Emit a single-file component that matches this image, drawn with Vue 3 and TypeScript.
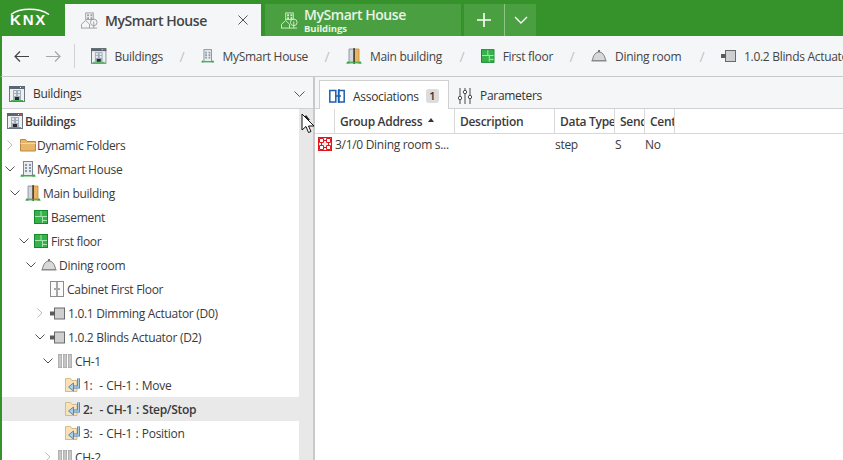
<script setup lang="ts">
interface Row {
  label: string
  icon: string
  left: number
  text: number
  chev?: 'open' | 'faint'
  bold?: boolean
  selected?: boolean
}

const crumbs = [
  { icon: 'i-buildings', label: 'Buildings', w: 16, gap: 8, total: 72 },
  { icon: 'i-house', label: 'MySmart House', w: 15, gap: 8, total: 107 },
  { icon: 'i-main', label: 'Main building', w: 16, gap: 8, total: 97 },
  { icon: 'i-floor', label: 'First floor', w: 15, gap: 8, total: 72 },
  { icon: 'i-room', label: 'Dining room', w: 16, gap: 8, total: 92 },
  { icon: 'i-device', label: '1.0.2 Blinds Actuator', w: 15, gap: 8, total: 160 },
]

const iconSize: Record<string, number> = { 'i-floor': 14, 'i-ch': 14, 'i-device': 15 }
const sizeOf = (icon: string): number => iconSize[icon] ?? 16

const rows: Row[] = [
  { label: 'Buildings', icon: 'i-buildings', left: 7, text: 25, bold: true },
  { label: 'Dynamic Folders', icon: 'i-folder', left: 20, text: 37, chev: 'faint' },
  { label: 'MySmart House', icon: 'i-house', left: 20, text: 37, chev: 'open' },
  { label: 'Main building', icon: 'i-main', left: 25, text: 43, chev: 'open' },
  { label: 'Basement', icon: 'i-floor', left: 34, text: 51 },
  { label: 'First floor', icon: 'i-floor', left: 34, text: 51, chev: 'open' },
  { label: 'Dining room', icon: 'i-room', left: 41, text: 59, chev: 'open' },
  { label: 'Cabinet First Floor', icon: 'i-cabinet', left: 49, text: 67 },
  { label: '1.0.1 Dimming Actuator (D0)', icon: 'i-device', left: 50, text: 68, chev: 'faint' },
  { label: '1.0.2 Blinds Actuator (D2)', icon: 'i-device', left: 50, text: 68, chev: 'open' },
  { label: 'CH-1', icon: 'i-ch', left: 58, text: 75, chev: 'open' },
  { label: '1:  - CH-1 : Move', icon: 'i-leaf', left: 65, text: 83 },
  { label: '2:  - CH-1 : Step/Stop', icon: 'i-leaf', left: 65, text: 83, selected: true },
  { label: '3:  - CH-1 : Position', icon: 'i-leaf', left: 65, text: 83 },
  { label: 'CH-2', icon: 'i-ch', left: 58, text: 75, chev: 'faint' },
]

const columns = [
  { label: '', w: 20 },
  { label: 'Group Address', w: 120, sort: true },
  { label: 'Description', w: 100 },
  { label: 'Data Type', w: 60 },
  { label: 'Send', w: 30 },
  { label: 'Central', w: 30 },
]

const cells = [
  { label: '3/1/0 Dining room s...', w: 220 },
  { label: 'step', w: 60 },
  { label: 'S', w: 30 },
  { label: 'No', w: 30 },
]
</script>

<template>
  <div class="app">
    <svg class="defs" width="0" height="0" aria-hidden="true">
      <defs>
        <symbol id="i-buildings" viewBox="0 0 16 16">
          <rect x="0.5" y="0.5" width="15" height="15" fill="#eef1f3" stroke="#6b7680" />
          <rect x="0" y="0" width="16" height="3" fill="#5b6670" />
          <rect x="11" y="1" width="1" height="1" fill="#fff" />
          <rect x="13" y="1" width="2" height="1" fill="#d85050" />
          <rect x="4" y="4" width="8" height="10" fill="#a2afbb" />
          <rect x="5" y="5" width="2" height="2" fill="#e4e9ed" />
          <rect x="9" y="5" width="2" height="2" fill="#e4e9ed" />
          <rect x="5" y="8" width="2" height="2" fill="#e4e9ed" />
          <rect x="9" y="8" width="2" height="2" fill="#e4e9ed" />
          <rect x="6" y="11" width="4" height="3" fill="#2b2b2b" />
          <rect x="2" y="14" width="12" height="1" fill="#46b452" />
        </symbol>
        <symbol id="i-house" viewBox="0 0 16 16">
          <rect x="3.5" y="0.5" width="9" height="14" fill="#e8ecef" stroke="#7b8894" />
          <path d="M5 3h2v2H5zM9 3h2v2H9zM5 6h2v2H5zM9 6h2v2H9zM5 9h2v2H5zM9 9h2v2H9z" fill="#8999a8" />
          <path d="M0 15.500 2 13l2 2.500zM12 15.500l2-2.500 2 2.500z" fill="#39a845" />
          <rect x="1" y="14.500" width="14" height="1" fill="#39a845" />
        </symbol>
        <symbol id="i-main" viewBox="0 0 16 16">
          <path d="M3 1h5v13H3z" fill="#cfd6dc" stroke="#7d8a96" stroke-width="0.8" />
          <path d="M8 1h5v13H8z" fill="#e8b566" stroke="#c08c3a" stroke-width="0.8" />
          <rect x="7.500" y="0" width="1.200" height="16" fill="#222" />
          <path d="M0 15.500 2 13l2 2.500zM12 15.500l2-2.500 2 2.500z" fill="#39a845" />
          <rect x="1" y="14.200" width="14" height="1.200" fill="#39a845" />
        </symbol>
        <symbol id="i-floor" viewBox="0 0 14 14">
          <rect x="0.500" y="0.500" width="13" height="13" fill="#35b34a" stroke="#128a2c" />
          <path d="M7 1v5M1 6.500h12M8.500 7v6M9 10.500h4" stroke="#a8e4b0" stroke-width="1" fill="none" />
        </symbol>
        <symbol id="i-room" viewBox="0 0 16 16">
          <rect x="7" y="2" width="2" height="2" fill="#777" />
          <path d="M1.500 12.500C2 7 5 4 8 4s6 3 6.500 8.500z" fill="#d8d8d8" stroke="#7a7a7a" />
          <rect x="0.500" y="12" width="15" height="1.500" fill="#8a8a8a" />
        </symbol>
        <symbol id="i-cabinet" viewBox="0 0 14 16">
          <rect x="0.500" y="0.500" width="13" height="15" fill="#fafafa" stroke="#8d8d8d" />
          <path d="M7 1v14" stroke="#555" />
          <path d="M5 7v2M9 7v2" stroke="#555" />
        </symbol>
        <symbol id="i-device" viewBox="0 0 15 14">
          <rect x="4.500" y="1.500" width="10" height="11" fill="#cfcfcf" stroke="#6b6b6b" />
          <rect x="0" y="5" width="5" height="4" fill="#5a5a5a" />
        </symbol>
        <symbol id="i-ch" viewBox="0 0 14 14">
          <rect x="0.300" y="0.300" width="3.400" height="13.400" fill="#c6c6c6" stroke="#9a9a9a" stroke-width="0.6" />
          <rect x="5.300" y="0.300" width="3.400" height="13.400" fill="#c6c6c6" stroke="#9a9a9a" stroke-width="0.6" />
          <rect x="10.300" y="0.300" width="3.400" height="13.400" fill="#c6c6c6" stroke="#9a9a9a" stroke-width="0.6" />
        </symbol>
        <symbol id="i-folder" viewBox="0 0 16 14">
          <path d="M0.500 13V1.500h5l1.500 2h8.500V13z" fill="#e8b66a" stroke="#b98a3e" />
          <path d="M0.500 5.500h15" stroke="#f5d8a2" />
        </symbol>
        <symbol id="i-leaf" viewBox="0 0 16 16">
          <path d="M0.500 14.500V1.500h5l1.500 2h5v11z" fill="#f8e3b8" stroke="#d6bb85" />
          <path d="M13.500 1.500v8.500H8" fill="none" stroke="#4f7fae" stroke-width="3" />
          <path d="M13.500 2v8H8" fill="none" stroke="#a9cdec" stroke-width="1.300" />
          <path d="M8.500 6 3.500 10l5 4z" fill="#a9cdec" stroke="#4f7fae" stroke-width="0.900" />
        </symbol>
        <symbol id="i-group" viewBox="0 0 14 14">
          <rect x="0.500" y="0.500" width="13" height="13" fill="#ffecec" stroke="#e8141c" />
          <path d="M1.500 1.500h4v4h-4zM8.500 1.500h4v4h-4zM1.500 8.500h4v4h-4zM8.500 8.500h4v4h-4z" fill="#fff" stroke="#e8141c" stroke-width="1" />
          <path d="M5.500 3.500h3M5.500 10.500h3M3.500 5.500v3M10.500 5.500v3" stroke="#e8141c" />
        </symbol>
        <symbol id="i-assoc" viewBox="0 0 16 16">
          <path d="M0.800 2.500h6v11.500h-6zM9.500 2.500h5.700v11.500H9.500z" fill="none" stroke="#1c5fb0" stroke-width="1.500" />
          <path d="M6 8h6M10 1v14" stroke="#1c5fb0" stroke-width="1.300" fill="none" />
        </symbol>
        <symbol id="i-params" viewBox="0 0 14 16">
          <path d="M2 0v16M7 0v16M12 0v16" stroke="#4b4b4b" />
          <circle cx="2" cy="10" r="1.700" fill="#fff" stroke="#4b4b4b" />
          <circle cx="7" cy="4" r="1.700" fill="#fff" stroke="#4b4b4b" />
          <circle cx="12" cy="9" r="1.700" fill="#fff" stroke="#4b4b4b" />
        </symbol>
        <symbol id="i-tab" viewBox="0 0 18 18">
          <rect x="5" y="1" width="8" height="7" fill="none" stroke="currentColor" />
          <path d="M6.500 2.500h2v2h-2zM10 2.500h2v2h-2zM6.500 5.500h2v2h-2zM10 5.500h2v2h-2z" fill="currentColor" />
          <path d="M0.500 17v-4L5 9l4 4v4" fill="none" stroke="currentColor" />
          <circle cx="13.500" cy="11" r="3.500" fill="none" stroke="currentColor" />
          <path d="M13.500 10v7M0 17h17" stroke="currentColor" fill="none" />
        </symbol>
      </defs>
    </svg>

    <header class="titlebar">
      <div class="logo">
        <svg class="logo-arc" width="40" height="8" viewBox="0 0 40 8">
          <path d="M1 7.500C10 0.500 29 0.500 39 7.500" fill="none" stroke="#fff" stroke-width="1.500" />
        </svg>
        <span class="logo-text">KNX</span>
      </div>
      <div class="tab tab-active">
        <svg class="tab-icon tab-icon-gray" width="17" height="17"><use href="#i-tab" /></svg>
        <span class="tab-title">MySmart House</span>
        <svg class="tab-close" width="10" height="10" viewBox="0 0 10 10">
          <path d="M0.500 0.500l9 9M9.500 0.500l-9 9" stroke="#555" fill="none" />
        </svg>
      </div>
      <div class="tab tab-other">
        <svg class="tab-icon tab-icon-white" width="17" height="17"><use href="#i-tab" /></svg>
        <div class="tab-stack">
          <span class="tab-title-white">MySmart House</span>
          <span class="tab-sub">Buildings</span>
        </div>
      </div>
      <div class="tab-btn tab-plus">
        <svg width="14" height="14" viewBox="0 0 14 14">
          <path d="M7 0v14M0 7h14" stroke="#fff" stroke-width="1.600" />
        </svg>
      </div>
      <div class="tab-btn tab-more">
        <svg width="14" height="8" viewBox="0 0 14 8">
          <path d="M1 1l6 6 6-6" stroke="#fff" stroke-width="1.400" fill="none" />
        </svg>
      </div>
    </header>

    <nav class="toolbar">
      <svg class="nav-arrow" width="15" height="11" viewBox="0 0 15 11">
        <path d="M15 5.500H1M6 0.500l-5 5 5 5" stroke="#444" stroke-width="1.200" fill="none" />
      </svg>
      <svg class="nav-arrow nav-fwd" width="15" height="11" viewBox="0 0 15 11">
        <path d="M0 5.500h14M9 0.500l5 5-5 5" stroke="#a6a6a6" stroke-width="1.200" fill="none" />
      </svg>
      <span class="nav-divider"></span>
      <div class="crumbs">
        <template v-for="(c, i) in crumbs" :key="c.label">
          <span v-if="i > 0" class="crumb-sep">/</span>
          <span class="crumb" :style="{ width: c.total + 'px' }">
            <svg :width="c.w" height="16" :style="{ marginRight: c.gap + 'px' }"><use :href="'#' + c.icon" /></svg>
            <span>{{ c.label }}</span>
          </span>
        </template>
      </div>
    </nav>

    <main class="body">
      <aside class="left">
        <div class="left-head">
          <svg width="16" height="16"><use href="#i-buildings" /></svg>
          <span class="left-head-label">Buildings</span>
          <svg class="left-head-chev" width="11" height="6" viewBox="0 0 11 6">
            <path d="M0.500 0.500l5 5 5-5" stroke="#555" fill="none" />
          </svg>
        </div>
        <div class="left-body">
          <div class="tree">
            <div
              v-for="r in rows"
              :key="r.label"
              class="row"
              :class="{ selected: r.selected, bold: r.bold, leaf: r.icon === 'i-leaf' }"
            >
              <span class="chev" :style="{ marginLeft: r.left - 18 + 'px' }">
                <svg v-if="r.chev === 'open'" width="10" height="6" viewBox="0 0 10 6">
                  <path d="M0.500 0.500l4.500 4.500 4.500-4.500" stroke="#555" fill="none" />
                </svg>
                <svg v-else-if="r.chev === 'faint'" width="6" height="10" viewBox="0 0 6 10">
                  <path d="M0.500 0.500l4.500 4.500-4.500 4.500" stroke="#bdbdbd" fill="none" />
                </svg>
              </span>
              <span class="row-icon" :style="{ width: r.text - r.left + 'px' }">
                <svg :width="sizeOf(r.icon)" :height="sizeOf(r.icon)"><use :href="'#' + r.icon" /></svg>
              </span>
              <span class="row-label">{{ r.label }}</span>
            </div>
          </div>
          <div class="scrollbar">
            <svg width="8" height="5" viewBox="0 0 8 5"><path d="M4 0l4 5H0z" fill="#222" /></svg>
          </div>
        </div>
      </aside>

      <section class="right">
        <div class="right-tabs">
          <div class="rtab rtab-active">
            <svg width="16" height="16"><use href="#i-assoc" /></svg>
            <span class="rtab-label">Associations</span>
            <span class="badge">1</span>
          </div>
          <div class="rtab rtab-plain">
            <svg width="14" height="16"><use href="#i-params" /></svg>
            <span class="rtab-label">Parameters</span>
          </div>
        </div>
        <div class="grid-head">
          <div
            v-for="c in columns"
            :key="c.label"
            class="col"
            :style="{ width: c.w + 'px' }"
          >
            <span class="col-label">{{ c.label }}</span>
            <svg v-if="c.sort" class="sort" width="6" height="4" viewBox="0 0 6 4"><path d="M3 0l3 4H0z" fill="#333" /></svg>
          </div>
        </div>
        <div class="grid-row">
          <svg class="grid-icon" width="14" height="14"><use href="#i-group" /></svg>
          <span v-for="c in cells" :key="c.label" class="cell" :style="{ width: c.w + 'px' }">{{ c.label }}</span>
        </div>
      </section>
    </main>

    <svg class="cursor" width="14" height="22" viewBox="0 0 14 22">
      <path d="M1 1v16l4-3.500 2.500 6 2.500-1-2.500-5.500H13z" fill="#fff" stroke="#111" stroke-width="1" />
    </svg>
  </div>
</template>

<style>
html, body { margin: 0; padding: 0; }
</style>

<style scoped>
.app {
  position: relative;
  width: 843px;
  height: 460px;
  overflow: hidden;
  display: flex;
  flex-direction: column;
  font-family: "Open Sans", "Noto Sans", sans-serif;
  font-size: 12px;
  color: #333;
  background: #f5f6f8;
}
.defs { position: absolute; }

.titlebar {
  height: 36px;
  flex: none;
  display: flex;
  align-items: flex-end;
  background: #36922a;
}
.logo {
  width: 65px;
  height: 36px;
  position: relative;
  flex: none;
}
.logo-arc { position: absolute; left: 10px; top: 7px; }
.logo-text {
  position: absolute;
  left: 10px;
  top: 12px;
  font-family: "Liberation Sans", sans-serif;
  font-weight: 700;
  font-size: 15px;
  line-height: 16px;
  letter-spacing: 1.800px;
  color: #fff;
}
.tab {
  width: 196px;
  height: 32px;
  display: flex;
  align-items: center;
  flex: none;
  box-sizing: border-box;
  padding-left: 16px;
}
.tab-active { background: #f5f6f8; }
.tab-other { background: #4a9f40; margin-left: 4px; color: #fff; }
.tab-icon { margin-right: 7px; flex: none; }
.tab-icon-gray { color: #9d9d9d; }
.tab-icon-white { color: #d5ecd0; }
.tab-title { font-size: 14px; font-weight: 600; color: #444; width: 133px; white-space: nowrap; letter-spacing: -0.450px; }
.tab-close { flex: none; }
.tab-stack { display: flex; flex-direction: column; line-height: 12px; margin-left: -1px; }
.tab-title-white { font-size: 14px; font-weight: 600; color: #e8f4e6; letter-spacing: -0.450px; line-height: 17px; }
.tab-sub { font-size: 9.500px; font-weight: 700; color: #e8f4e6; line-height: 12px; letter-spacing: -0.100px; }
.tab-btn {
  height: 32px;
  background: #4a9f40;
  display: flex;
  align-items: center;
  justify-content: center;
  flex: none;
  box-sizing: border-box;
}
.tab-plus { width: 41px; margin-left: 3px; border-right: 1px solid #8fc487; }
.tab-more { width: 31px; }

.toolbar {
  height: 41px;
  flex: none;
  box-sizing: border-box;
  display: flex;
  align-items: center;
  padding-left: 12px;
  border-left: 2px solid #36922a;
  border-bottom: 1px solid #c9c9c9;
  background: #f5f6f8;
}
.nav-arrow { flex: none; }
.nav-fwd { margin-left: 17px; }
.nav-divider { width: 1px; height: 24px; background: #d2d2d2; margin-left: 13px; flex: none; }
.crumbs { display: flex; align-items: center; margin-left: 16px; white-space: nowrap; letter-spacing: -0.300px; color: #444; }
.crumb { display: inline-flex; align-items: center; flex: none; }
.crumb-sep { width: 38px; text-align: center; color: #c4c4c4; font-size: 14px; flex: none; }

.body { flex: 1; display: flex; min-height: 0; border-left: 2px solid #36922a; }

.left {
  width: 311px;
  flex: none;
  display: flex;
  flex-direction: column;
  border-right: 2px solid #c9c9c9;
}
.left-head {
  height: 32px;
  flex: none;
  box-sizing: border-box;
  display: flex;
  align-items: center;
  padding: 2px 8px 0 7px;
  border-bottom: 1px solid #d0d0d0;
  letter-spacing: -0.300px;
}
.left-head-label { margin-left: 8px; flex: 1; }
.left-body { flex: 1; display: flex; min-height: 0; background: #fff; }
.tree { width: 297px; flex: none; overflow: hidden; background: #fff; }
.row {
  height: 24px;
  display: flex;
  align-items: center;
  white-space: pre;
  letter-spacing: -0.300px;
}
.row.leaf { word-spacing: 0.600px; }
.row.selected { background: #e9e9e9; font-weight: 600; }
.row.bold { font-weight: 600; }
.chev { width: 12px; margin-right: 4px; flex: none; display: flex; justify-content: center; align-items: center; }
.row-icon { flex: none; display: flex; }
.row-label { color: #3a3a3a; }
.scrollbar {
  width: 14px;
  flex: none;
  background: #e8e8e8;
  display: flex;
  justify-content: center;
  padding-top: 6px;
  box-sizing: border-box;
  align-items: flex-start;
}

.right { flex: 1; min-width: 0; background: #fff; display: flex; flex-direction: column; }
.right-tabs {
  height: 32px;
  flex: none;
  box-sizing: border-box;
  display: flex;
  align-items: flex-end;
  padding-left: 4px;
  background: #f5f6f8;
  border-bottom: 1px solid #d0d0d0;
}
.rtab {
  height: 28px;
  box-sizing: border-box;
  display: flex;
  align-items: center;
  padding: 0 9px;
  letter-spacing: -0.300px;
}
.rtab-plain { padding-top: 3px; }
.rtab-active {
  width: 130px;
  background: #fff;
  border: 1px solid #d0d0d0;
  border-bottom: none;
  margin-bottom: -1px;
  height: 29px;
  padding-top: 2px;
}
.rtab-label { margin-left: 8px; }
.rtab-active .rtab-label { flex: 1; }
.badge {
  width: 13px;
  height: 14px;
  border-radius: 3px;
  background: #dcdcdc;
  font-weight: 600;
  font-size: 11px;
  line-height: 14px;
  text-align: center;
  letter-spacing: 0;
}
.grid-head {
  height: 25px;
  flex: none;
  display: flex;
  box-sizing: border-box;
  border-bottom: 1px solid #d8d8d8;
  background: #fff;
}
.col {
  box-sizing: border-box;
  display: flex;
  align-items: center;
  border-right: 1px solid #d8d8d8;
  padding-left: 5px;
  overflow: hidden;
  white-space: nowrap;
  font-weight: 600;
  letter-spacing: -0.300px;
  color: #3a3a3a;
  flex: none;
}
.sort { margin-left: 6px; margin-top: -3px; flex: none; }
.grid-row {
  height: 20px;
  display: flex;
  align-items: center;
  padding-left: 3px;
  letter-spacing: -0.300px;
  color: #3a3a3a;
  white-space: nowrap;
}
.grid-icon { flex: none; margin-right: 3px; }
.cell { flex: none; box-sizing: border-box; overflow: hidden; }

.cursor { position: absolute; left: 301px; top: 113px; }
</style>
